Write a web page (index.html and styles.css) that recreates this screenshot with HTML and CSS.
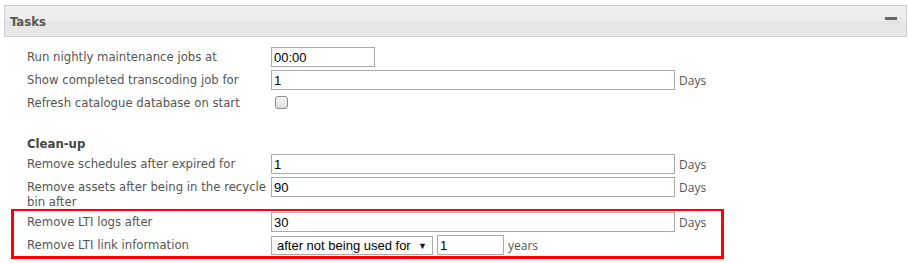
FILE: index.html
```html
<!DOCTYPE html>
<html>

<head>
  <meta charset="utf8">
  <title>Tasks</title>
  <link rel="stylesheet" href="styles.css">
</head>

<body>
  <div class="panel">
    <div class="panel-head">
      <span class="panel-title">Tasks</span>
      <span class="collapse"></span>
    </div>

    <div class="panel-body">
      <div class="row">
        <label>Run nightly maintenance jobs at</label>
        <div class="field"><input type="text" class="short" value="00:00"></div>
      </div>
      <div class="row">
        <label>Show completed transcoding job for</label>
        <div class="field"><input type="text" class="long" value="1"><span class="unit">Days</span></div>
      </div>
      <div class="row">
        <label>Refresh catalogue database on start</label>
        <div class="field"><span class="checkbox"></span></div>
      </div>

      <h3>Clean-up</h3>

      <div class="row">
        <label>Remove schedules after expired for</label>
        <div class="field"><input type="text" class="long" value="1"><span class="unit">Days</span></div>
      </div>
      <div class="row">
        <label>Remove assets after being in the recycle bin after</label>
        <div class="field"><input type="text" class="long" value="90"><span class="unit">Days</span></div>
      </div>

      <div class="highlight">
        <div class="row">
          <label>Remove LTI logs after</label>
          <div class="field"><input type="text" class="long" value="30"><span class="unit">Days</span></div>
        </div>
        <div class="row">
          <label>Remove LTI link information</label>
          <div class="field">
            <span class="select">after not being used for<span class="arrow">&#9660;</span></span>
            <input type="text" class="tiny" value="1"><span class="unit">years</span>
          </div>
        </div>
      </div>
    </div>
  </div>
</body>

</html>
```

FILE: styles.css
```css
/* General */
body {
  margin: 0;
  padding: 5px 2px 0 4px;
  background: #fff;
  font-family: Tahoma, "DejaVu Sans Condensed", "DejaVu Sans", sans-serif;
  font-size: 13px;
  color: #555;
}

/* Panel header */
.panel-head {
  display: flex;
  justify-content: space-between;
  align-items: center;
  height: 30px;
  padding: 0 9px 0 5px;
  border: 1px solid #d0d0d0;
  background: linear-gradient(#eeeeee 0, #ececec 48%, #e3e3e3 52%, #e9e9e9 100%);
}

.panel-title {
  font-weight: bold;
  font-size: 13px;
  color: #555;
}

.collapse {
  width: 12px;
  height: 3px;
  margin-top: -5px;
  background: #666;
}

/* Panel body */
.panel-body {
  padding: 10px 0 0 23px;
}

.row {
  display: grid;
  grid-template-columns: 244px auto;
  align-items: start;
  min-height: 20px;
  margin-bottom: 3px;
}

.row label {
  padding-top: 2px;
  padding-right: 4px;
  line-height: 15px;
}

.field {
  display: flex;
  align-items: center;
}

/* Inputs */
input[type="text"] {
  box-sizing: border-box;
  height: 20px;
  margin: 0;
  padding: 0 2px;
  border: 1px solid #aaa;
  font-family: Arial, "Liberation Sans", sans-serif;
  font-size: 13px;
  color: #000;
}

.short {
  width: 104px;
}

.long {
  width: 404px;
}

.tiny {
  width: 67px;
  margin-left: 4px !important;
}

.unit {
  margin-left: 4px;
  font-family: "Open Sans", sans-serif;
  font-size: 12px;
  color: #555;
}

.checkbox {
  box-sizing: border-box;
  width: 13px;
  height: 13px;
  margin: 3px 0 0 4px;
  border: 1px solid #8f8f8f;
  border-radius: 3px;
  background: linear-gradient(#f4f4f4, #dcdcdc);
}

.select {
  box-sizing: border-box;
  display: flex;
  justify-content: space-between;
  align-items: center;
  width: 162px;
  height: 19px;
  margin-top: 1px;
  padding: 0 5px;
  border: 1px solid #aaa;
  font-family: Arial, "Liberation Sans", sans-serif;
  font-size: 13px;
  color: #000;
}

.arrow {
  font-size: 9px;
  color: #111;
}

/* Headings */
h3 {
  margin: 23px 0 3px 0;
  font-size: 13px;
  line-height: 15px;
  color: #444;
}

/* Highlighted area */
.highlight {
  width: 694px;
  margin: -3px 0 0 -16px;
  padding: 1px 0 0 13px;
  border: 3px solid #f00;
  border-top-width: 2px;
}

.highlight .row:last-child {
  margin-bottom: 1px;
}
```
